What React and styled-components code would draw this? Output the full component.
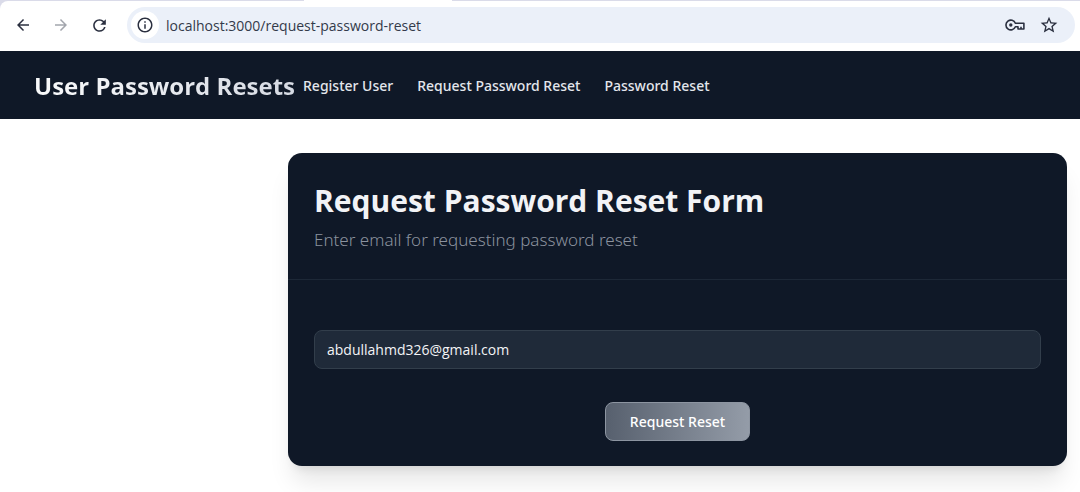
import React, { useState } from 'react'
import styled, { createGlobalStyle } from 'styled-components'
import { MdArrowBack, MdArrowForward, MdRefresh, MdInfoOutline, MdOutlineStarOutline } from 'react-icons/md'

const GlobalStyle = createGlobalStyle`
* {
    box-sizing: border-box;
}
body {
    margin: 0;
    background: #ffffff;
    font-family: 'Open Sans', 'Noto Sans', sans-serif;
}
`

const Browser = styled.header`
    background: #dadbe9;
`
const TabStrip = styled.div`
    height: 1px;
    padding-left: 304px;
`
const ActiveTab = styled.div`
    width: 148px;
    height: 1px;
    background: #ffffff;
`
const Toolbar = styled.div`
    display: flex;
    align-items: center;
    height: 50px;
    padding: 0 5px 2px 13px;
    background: #ffffff;
    border-radius: 8px 0 0 0;
`
const ToolButton = styled.button`
    display: flex;
    align-items: center;
    justify-content: center;
    width: 20px;
    height: 20px;
    margin-right: 18px;
    padding: 0;
    border: 0;
    background: none;
    color: ${props => (props.disabled ? '#a3a6ad' : '#2b3040')};
`
const AddressBar = styled.div`
    display: flex;
    align-items: center;
    flex: 1;
    height: 36px;
    padding: 0 16px 0 4px;
    border-radius: 18px;
    background: #ebf0f9;
`
const SiteInfo = styled.button`
    display: flex;
    align-items: center;
    justify-content: center;
    width: 28px;
    height: 28px;
    padding: 0;
    border: 0;
    border-radius: 50%;
    background: #ffffff;
    color: #2b3040;
`
const Address = styled.input`
    flex: 1;
    min-width: 0;
    padding: 0 0 0 7px;
    border: 0;
    outline: 0;
    background: none;
    color: #333a4a;
    font: 14px 'Open Sans', 'Noto Sans', sans-serif;
`
const BarButtons = styled.div`
    display: flex;
    gap: 14px;
`
const BarButton = styled.button`
    display: flex;
    align-items: center;
    justify-content: center;
    width: 20px;
    height: 20px;
    padding: 0;
    border: 0;
    background: none;
    color: #2b3040;
`
const Navbar = styled.nav`
    display: flex;
    align-items: center;
    gap: 8px;
    height: 68px;
    padding: 0 34px;
    background: #0f1827;
`
const Brand = styled.a`
    background: linear-gradient(to right, #f9fafb, #d6dae3);
    background-clip: text;
    color: transparent;
    font-size: 24px;
    font-weight: 700;
    text-decoration: none;
`
const NavLinks = styled.div`
    display: flex;
    gap: 24px;
`
const NavLink = styled.a`
    color: #e3e6ec;
    font-family: 'Noto Sans', 'Open Sans', sans-serif;
    font-size: 14px;
    font-weight: 500;
    text-decoration: none;
`
const Main = styled.main`
    padding: 34px 13px 26px 288px;
`
const Card = styled.section`
    border-radius: 14px;
    background: #0f1827;
    box-shadow: 0 20px 25px -5px rgba(0,0,0, 0.1), 0 8px 10px -6px rgba(0,0,0, 0.1);
`
const CardHeader = styled.div`
    padding: 26px 26px 22px;
    border-bottom: 1px solid #1d2837;
`
const Title = styled.h1`
    margin: 0;
    color: #f2f3f6;
    font-size: 30px;
    line-height: 44px;
    font-weight: 700;
`
const Subtitle = styled.p`
    margin: 0;
    color: #8b929e;
    font-family: 'Noto Sans', 'Open Sans', sans-serif;
    font-size: 17px;
    line-height: 34px;
    font-weight: 300;
`
const Form = styled.form`
    display: flex;
    flex-direction: column;
    align-items: center;
    gap: 33px;
    padding: 50px 26px 25px;
`
const EmailInput = styled.input`
    width: 100%;
    height: 39px;
    padding: 0 12px;
    border: 1px solid #323e4b;
    border-radius: 8px;
    outline: 0;
    background: #1f2a39;
    color: #f3f4f6;
    font: 14px 'Open Sans', 'Noto Sans', sans-serif;
`
const SubmitButton = styled.button`
    height: 39px;
    padding: 0 24px;
    border: 1px solid #8d95a1;
    border-radius: 8px;
    background: linear-gradient(to right, #57606e, #949ca8);
    color: #ffffff;
    font: 500 14px 'Noto Sans', 'Open Sans', sans-serif;
`

const KeyIcon = () => (
    <svg width="20" height="12" viewBox="0 0 20 12" fill="none" stroke="currentColor" strokeWidth="1.6">
        <path d="M10.4 4.2A4.9 4.9 0 1 0 10.4 7.8H13V10H18.9V4.2Z" strokeLinejoin="round" />
        <path d="M16 10V7.8" />
        <circle cx="5.8" cy="6" r="1.7" fill="currentColor" stroke="none" />
    </svg>
)

const App = () => {
    const [email, setEmail] = useState('abdullahmd326@gmail.com')

    return (
        <>
            <GlobalStyle />
            <Browser>
                <TabStrip>
                    <ActiveTab />
                </TabStrip>
                <Toolbar>
                    <ToolButton aria-label="Back"><MdArrowBack size={18} /></ToolButton>
                    <ToolButton aria-label="Forward" disabled><MdArrowForward size={18} /></ToolButton>
                    <ToolButton aria-label="Reload"><MdRefresh size={19} /></ToolButton>
                    <AddressBar>
                        <SiteInfo aria-label="Site information"><MdInfoOutline size={18} /></SiteInfo>
                        <Address aria-label="Address" defaultValue="localhost:3000/request-password-reset" />
                        <BarButtons>
                            <BarButton aria-label="Passwords"><KeyIcon /></BarButton>
                            <BarButton aria-label="Bookmark"><MdOutlineStarOutline size={20} /></BarButton>
                        </BarButtons>
                    </AddressBar>
                </Toolbar>
            </Browser>
            <Navbar>
                <Brand href="#">User Password Resets</Brand>
                <NavLinks>
                    <NavLink href="#register">Register User</NavLink>
                    <NavLink href="#request">Request Password Reset</NavLink>
                    <NavLink href="#reset">Password Reset</NavLink>
                </NavLinks>
            </Navbar>
            <Main>
                <Card>
                    <CardHeader>
                        <Title>Request Password Reset Form</Title>
                        <Subtitle>Enter email for requesting password reset</Subtitle>
                    </CardHeader>
                    <Form onSubmit={e => e.preventDefault()}>
                        <EmailInput
                            type="email"
                            aria-label="Email"
                            value={email}
                            onChange={e => setEmail(e.target.value)}
                        />
                        <SubmitButton type="submit">Request Reset</SubmitButton>
                    </Form>
                </Card>
            </Main>
        </>
    )
}

export default App
